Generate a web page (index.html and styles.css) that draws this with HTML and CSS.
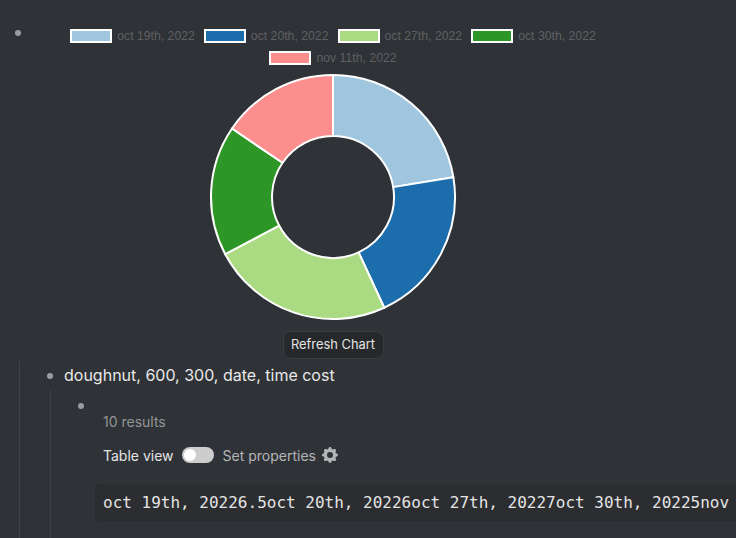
FILE: index.html
```html
<!DOCTYPE html>
<html lang="en">
<head>
<meta charset="utf-8">
<title>Doughnut chart</title>
<link rel="stylesheet" href="styles.css">
</head>
<body>
<div class="page">
  <div class="top-block">
    <span class="bullet top-bullet"></span>
    <div class="chart">
      <ul class="legend">
        <li class="legend-item"><span class="swatch c1"></span>oct 19th, 2022</li>
        <li class="legend-item"><span class="swatch c2"></span>oct 20th, 2022</li>
        <li class="legend-item"><span class="swatch c3"></span>oct 27th, 2022</li>
        <li class="legend-item"><span class="swatch c4"></span>oct 30th, 2022</li>
        <li class="legend-item"><span class="swatch c5"></span>nov 11th, 2022</li>
      </ul>
      <svg class="donut" viewBox="-124 -124 248 248" width="248" height="248" aria-hidden="true">
        <g stroke="#fff" stroke-width="2" stroke-linejoin="round">
          <path fill="#9fc6de" d="M0 -122A122 122 0 0 1 120.39 -19.74L60.2 -9.87A61 61 0 0 0 0 -61Z"/>
          <path fill="#1c6dab" d="M120.39 -19.74A122 122 0 0 1 51.23 110.72L25.62 55.36A61 61 0 0 0 60.2 -9.87Z"/>
          <path fill="#aadb82" d="M51.23 110.72A122 122 0 0 1 -107.78 57.16L-53.89 28.58A61 61 0 0 0 25.62 55.36Z"/>
          <path fill="#2e9626" d="M-107.78 57.16A122 122 0 0 1 -100.97 -68.48L-50.48 -34.24A61 61 0 0 0 -53.89 28.58Z"/>
          <path fill="#fd8e8e" d="M-100.97 -68.48A122 122 0 0 1 0 -122L0 -61A61 61 0 0 0 -50.48 -34.24Z"/>
        </g>
      </svg>
      <button class="refresh" type="button">Refresh Chart</button>
    </div>
  </div>

  <div class="children level-one">
    <div class="block-row">
      <span class="bullet"></span>
      <span class="block-title">doughnut, 600, 300, date, time cost</span>
    </div>
    <div class="children level-two">
      <div class="block-row empty-row">
        <span class="bullet"></span>
      </div>
      <div class="query">
        <div class="results">10 results</div>
        <div class="controls">
          <span class="table-view">Table view</span>
          <span class="toggle"><span class="knob"></span></span>
          <span class="set-props">Set properties</span>
          <svg class="gear" viewBox="0 0 20 20" width="20" height="20" aria-hidden="true"><path fill="currentColor" fill-rule="evenodd" clip-rule="evenodd" d="M11.49 3.17c-.38-1.56-2.6-1.56-2.98 0a1.532 1.532 0 01-2.286.948c-1.372-.836-2.942.734-2.106 2.106.54.886.061 2.042-.947 2.287-1.561.379-1.561 2.6 0 2.978a1.532 1.532 0 01.947 2.287c-.836 1.372.734 2.942 2.106 2.106a1.532 1.532 0 012.287.947c.379 1.561 2.6 1.561 2.978 0a1.533 1.533 0 012.287-.947c1.372.836 2.942-.734 2.106-2.106a1.533 1.533 0 01.947-2.287c1.561-.379 1.561-2.6 0-2.978a1.532 1.532 0 01-.947-2.287c.836-1.372-.734-2.942-2.106-2.106a1.532 1.532 0 01-2.287-.947zM10 13a3 3 0 100-6 3 3 0 000 6z"/></svg>
        </div>
        <pre class="code">oct 19th, 20226.5oct 20th, 20226oct 27th, 20227oct 30th, 20225nov</pre>
      </div>
    </div>
  </div>
</div>
</body>
</html>
```
FILE: styles.css
```css
* { box-sizing: border-box; }
html, body { margin: 0; padding: 0; height: 538px; overflow: hidden; background: #2f3236; }
.page { width: 736px; height: 538px; overflow: hidden; font-family: Inter, "Noto Sans", sans-serif; color: #e4e4e4; }

.bullet { display: block; width: 6px; height: 6px; border-radius: 50%; background: #9a9c9f; flex: none; }

.top-block { display: flex; padding: 30px 0 0 15px; }
.top-bullet { margin-right: 12px; }

.chart { width: 600px; display: flex; flex-direction: column; align-items: center; margin-top: -1px; }
.legend { list-style: none; margin: 0; padding: 0; width: 100%; display: flex; flex-wrap: wrap; justify-content: center; column-gap: 9px; row-gap: 8px; font: 12.25px/14px "Liberation Sans", Arial, sans-serif; color: #5f6062; }
.legend-item { display: flex; align-items: center; gap: 5px; height: 14px; white-space: nowrap; }
.swatch { display: block; width: 42px; height: 14px; border: 2px solid #fff; }
.c1 { background: #9fc6de; }
.c2 { background: #1c6dab; }
.c3 { background: #aadb82; }
.c4 { background: #2e9626; }
.c5 { background: #fd8e8e; }

.donut { display: block; margin-top: 8px; }

.refresh { display: block; width: 101px; height: 28px; margin-top: 10px; padding: 0; background: #26282b; border: 1px solid #3a3c40; border-radius: 8px; color: #e4e4e4; font: 12.9px/26px Inter, sans-serif; }

.children { border-left: 1px solid #424346; }
.level-one { margin: 2px 0 0 19px; padding-top: 1px; height: 200px; }
.block-row { display: flex; align-items: center; }
.level-one > .block-row { height: 28px; padding-left: 27px; }
.block-row > .bullet { margin-right: 12px; }
.block-title { font-size: 16px; line-height: 26px; margin: 0 0 2px -1px; color: #e8e8e8; white-space: nowrap; }

.level-two { margin: 0 0 0 30px; height: 160px; }
.empty-row { height: 32px; padding-left: 27px; }
.query { padding-left: 52px; }
.results { font-size: 14px; line-height: 20px; color: #939598; margin-top: -10px; }
.controls { display: flex; align-items: center; height: 24px; margin-top: 11px; font-size: 14px; }
.table-view { color: #e4e4e4; }
.toggle { display: block; width: 32px; height: 16px; margin-left: 8px; padding: 2px; border-radius: 8px; background: #cdcdcd; }
.knob { display: block; width: 12px; height: 12px; border-radius: 50%; background: #fff; }
.set-props { color: #b4b5b7; margin-left: 9px; }
.gear { color: #b4b5b7; margin-left: 4px; }
.code { margin: 17px 0 0 -8px; width: 700px; height: 38px; padding: 0 8px; border-radius: 4px; background: #2b2d30; font: 16px/38px "DejaVu Sans Mono", monospace; color: #e4e4e4; white-space: pre; overflow: hidden; }
```
